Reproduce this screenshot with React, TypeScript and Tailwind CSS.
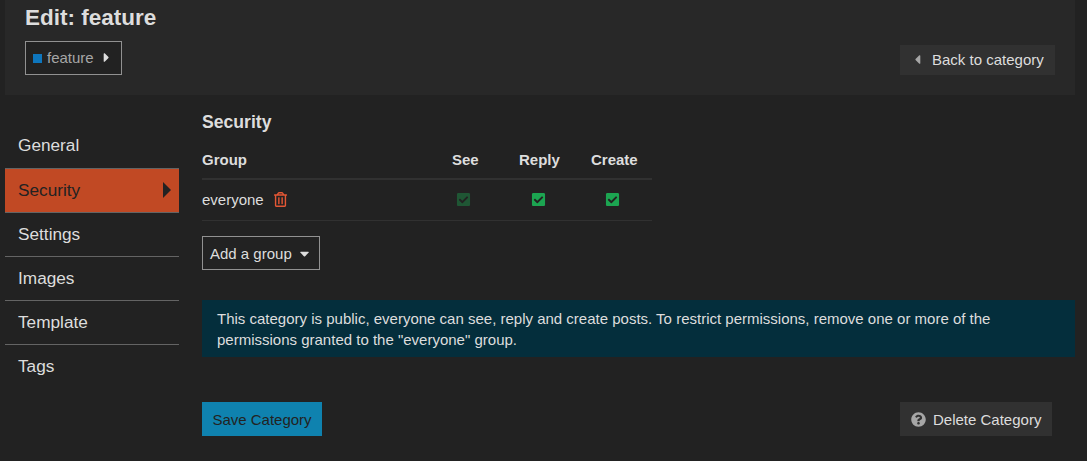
import type { ReactNode } from "react";
import {
  FaCaretDown,
  FaCaretLeft,
  FaCaretRight,
  FaCheckSquare,
  FaQuestionCircle,
  FaRegTrashAlt,
} from "react-icons/fa";

const tabs = ["General", "Security", "Settings", "Images", "Template", "Tags"];

const rowGrid = "grid grid-cols-[250px_67px_72px_61px]";

function NavItem({ label, active, first }: { label: string; active: boolean; first: boolean }) {
  return (
    <li
      className={[
        "flex h-11 items-center justify-between pl-[13px] pr-2 text-[17.23px]",
        first ? "pb-px" : "border-t border-[#646464]",
        active ? "bg-[#c14924] text-[#222]" : "",
      ].join(" ")}
    >
      <a href="#">{label}</a>
      {active ? (
        <svg className="-mt-px" width="8" height="16" viewBox="0 0 8 16" fill="#222">
          <path d="M0 0L8 8L0 16Z" />
        </svg>
      ) : null}
    </li>
  );
}

function GrayButton({ children, className = "" }: { children: ReactNode; className?: string }) {
  return (
    <button type="button" className={`flex items-center bg-[#313131] ${className}`}>
      {children}
    </button>
  );
}

function Permission({ disabled = false, className = "" }: { disabled?: boolean; className?: string }) {
  return (
    <span className={`text-[15px] text-[#1ca551] ${disabled ? "opacity-40" : ""} ${className}`}>
      <FaCheckSquare />
    </span>
  );
}

export default function App() {
  return (
    <div className="h-[461px] w-[1087px] overflow-hidden bg-[#222] pl-[5px] pr-3 font-['Liberation_Sans',Arial,sans-serif] text-[15px] leading-[21px] text-[#ddd]">
      {/* header */}
      <header className="flex h-[95px] items-start justify-between bg-[#282828] pl-5 pr-5">
        <div>
          <h2 className="mt-1 text-[22.5px] font-bold leading-7">Edit: feature</h2>
          <button
            type="button"
            className="mt-[9px] flex h-[34px] w-[97px] items-center border border-[#919191] bg-[#222] pb-0.5 pl-[7px] text-[#a6a6a6]"
          >
            <span className="mr-[5px] mt-[3px] h-[9px] w-[9px] bg-[#0e76bd]" />
            feature
            <FaCaretRight className="ml-[5px] text-[15px] text-[#ddd]" />
          </button>
        </div>
        <GrayButton className="mt-[45px] h-[30px] w-[155px] pb-px pl-[10px]">
          <FaCaretLeft className="mr-[7px] text-[15px] text-[#a6a6a6]" />
          Back to category
        </GrayButton>
      </header>

      <div className="flex">
        <nav className="w-[174px] shrink-0 pt-[29px]">
          <ul>
            {tabs.map((t, i) => (
              <NavItem key={t} label={t} active={t === "Security"} first={i === 0} />
            ))}
          </ul>
        </nav>

        <main className="ml-[23px] flex-1 pt-4">
          <h3 className="text-[17.6px] font-bold leading-[22px]">Security</h3>

          {/* permissions */}
          <div className="mt-2 w-[450px]">
            <div className={`${rowGrid} h-[39px] items-center border-b-2 border-[#313131] font-bold`}>
              <span>Group</span>
              <span>See</span>
              <span>Reply</span>
              <span>Create</span>
            </div>
            <div className={`${rowGrid} h-[41px] items-center border-b border-[#313131] pb-0.5`}>
              <span className="flex items-center">
                everyone
                <FaRegTrashAlt className="ml-[9px] text-[15px] text-[#e45735]" />
              </span>
              <Permission disabled className="ml-1" />
              <Permission className="ml-3" />
              <Permission className="ml-[14px]" />
            </div>
          </div>

          <button
            type="button"
            className="mt-[15px] flex h-[34px] w-[118px] items-center border border-[#919191] pl-[7px]"
          >
            Add a group
            <FaCaretDown className="ml-[5px] text-[15px]" />
          </button>

          <div className="mt-[30px] h-[57px] bg-[#042e3c] px-[15px] pt-2">
            <p className="w-[800px]">
              This category is public, everyone can see, reply and create posts. To restrict permissions,
              remove one or more of the permissions granted to the "everyone" group.
            </p>
          </div>

          <div className="mt-[45px] flex justify-between pr-[23px]">
            <button type="button" className="h-[34px] w-[120px] bg-[#0f82af] text-[#222]">
              Save Category
            </button>
            <GrayButton className="h-[34px] w-[152px] pl-[11px]">
              <FaQuestionCircle className="mr-[7px] text-[15px] text-[#a6a6a6]" />
              Delete Category
            </GrayButton>
          </div>
        </main>
      </div>
    </div>
  );
}
